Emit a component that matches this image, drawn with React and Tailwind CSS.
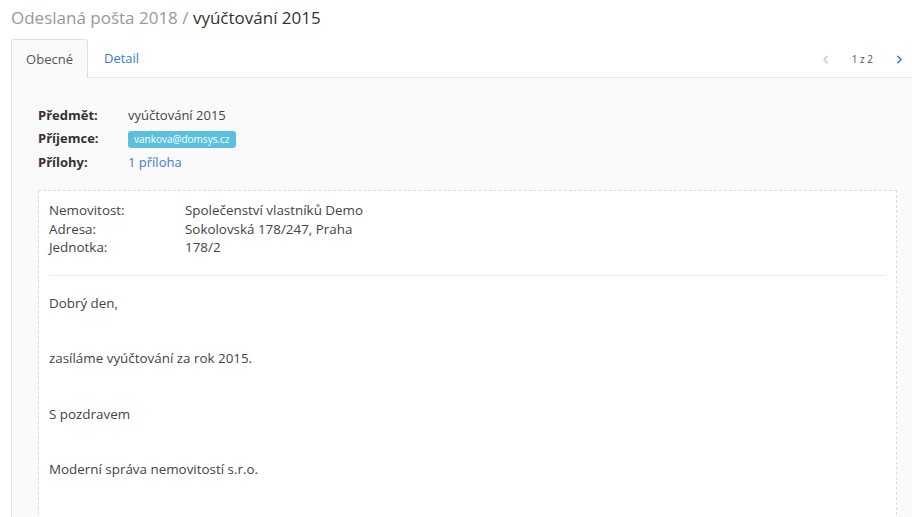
import { ChevronLeft, ChevronRight } from 'lucide-react';

const props = [
  ['Nemovitost:', 'Společenství vlastníků Demo'],
  ['Adresa:', 'Sokolovská 178/247, Praha'],
  ['Jednotka:', '178/2'],
];

export default function App() {
  return (
    <div className="min-h-[517px] bg-white text-[13px] text-[#333] font-['Open_Sans',sans-serif] overflow-hidden">
      <h1 className="px-[11px] pt-[6px] text-[17px] leading-[24px] text-[#999]">
        Odeslaná pošta 2018 / <span className="text-[#333]">vyúčtování 2015</span>
      </h1>

      <div className="mt-[10px] ml-[11px] flex items-end border-b border-[#e5e5e5] h-[38px]">
        <div className="h-[39px] -mb-px w-[77px] flex items-center justify-center bg-[#fafafa] border border-b-0 border-[#e0e0e0] rounded-t-[3px] text-[#555] pt-[2px]">
          Obecné
        </div>
        <div className="h-[38px] px-[16px] pt-[2px] flex items-center text-[#3a80c8]">Detail</div>
        <div className="ml-auto h-[38px] flex items-center pr-[6px] pt-[2px]">
          <ChevronLeft size={13} strokeWidth={3} className="text-[#ccc] mr-[20px]" />
          <span className="text-[10px] text-[#555] mr-[20px]">1 z 2</span>
          <ChevronRight size={13} strokeWidth={3} className="text-[#3a80c8]" />
        </div>
      </div>

      <div className="ml-[11px] bg-[#fafafa] border-l border-[#e5e5e5] pl-[26px] pr-[15px] pt-[28px] min-h-[440px]">
        <div className="grid grid-cols-[90px_1fr] gap-y-[5px] leading-[18px]">
          <div className="font-bold">Předmět:</div>
          <div className="text-[#444]">vyúčtování 2015</div>
          <div className="font-bold">Příjemce:</div>
          <div>
            <span className="inline-block bg-[#5bc0de] text-white text-[10px] leading-[17px] px-[6px] rounded-[3px]">
              vankova@domsys.cz
            </span>
          </div>
          <div className="font-bold">Přílohy:</div>
          <div className="text-[#3a80c8]">1 příloha</div>
        </div>

        <div className="mt-[19px] bg-white border border-dashed border-[#ddd] border-b-0 px-[10px] pt-[10px] pb-[40px] min-h-[340px] text-[13.4px]">
          <div className="grid grid-cols-[136px_1fr] leading-[18.5px] text-[#444]">
            {props.map(([k, v]) => (
              <div key={k} className="contents">
                <div>{k}</div>
                <div>{v}</div>
              </div>
            ))}
          </div>
          <hr className="mt-[18px] mb-[18px] border-t border-[#eee]" />
          <div className="flex flex-col gap-[37px] leading-[18.5px] text-[#444]">
            <p>Dobrý den,</p>
            <p>zasíláme vyúčtování za rok 2015.</p>
            <p>S pozdravem</p>
            <p>Moderní správa nemovitostí s.r.o.</p>
          </div>
        </div>
      </div>
    </div>
  );
}
